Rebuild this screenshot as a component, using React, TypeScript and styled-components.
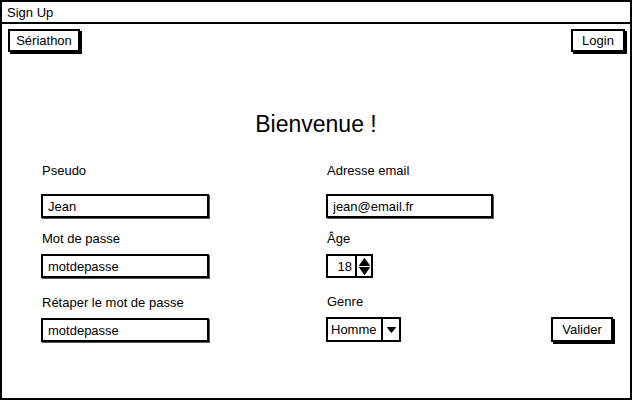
import React from "react";
import styled, { createGlobalStyle } from "styled-components";

const Global = createGlobalStyle`
  html, body { margin: 0; padding: 0; background: #fff; }
  body { font-family: "Liberation Sans", Arial, sans-serif; color: #000; }
  * { box-sizing: border-box; }
`;

const Frame = styled.div`
  width: 632px;
  height: 400px;
  border: 2px solid #000;
  display: flex;
  flex-direction: column;
  background: #fff;
`;

const TitleBar = styled.div`
  height: 22px;
  line-height: 21px;
  border-bottom: 2px solid #000;
  padding-left: 5px;
  font-size: 13px;
`;

const Toolbar = styled.div`
  display: flex;
  justify-content: space-between;
  align-items: flex-start;
  padding: 5px 5px 0 6px;
`;

const SketchButton = styled.button<{ $w: number; $h?: number }>`
  width: ${(p) => p.$w}px;
  height: ${(p) => p.$h ?? 23}px;
  border: 2px solid #000;
  background: #fff;
  box-shadow: 2px 2px 0 #000;
  font-family: inherit;
  font-size: 13px;
  color: #000;
  padding: 0;
  display: flex;
  align-items: center;
  justify-content: center;
  cursor: pointer;
`;

const Heading = styled.h1`
  margin: 59px 0 0;
  font-size: 23px;
  line-height: 26px;
  font-weight: normal;
  text-align: center;
`;

const Form = styled.div`
  display: flex;
  flex-direction: column;
  padding-left: 39px;
`;

const FormRow = styled.div<{ $top: number }>`
  display: grid;
  grid-template-columns: 285px 225px auto;
  align-items: end;
  margin-top: ${(p) => p.$top}px;
`;

const Field = styled.div<{ $gap: number }>`
  display: flex;
  flex-direction: column;
  align-items: flex-start;
  gap: ${(p) => p.$gap}px;
`;

const Label = styled.label`
  font-size: 13px;
  line-height: 16px;
  padding-left: 1px;
`;

const TextBox = styled.input<{ $w: number }>`
  width: ${(p) => p.$w}px;
  height: 24px;
  border: 2px solid #000;
  box-shadow: 1px 1px 0 #555;
  padding: 0 5px;
  font-family: inherit;
  font-size: 13px;
  color: #000;
  background: #fff;
  outline: none;
`;

const Combo = styled.div<{ $h: number }>`
  display: flex;
  height: ${(p) => p.$h}px;
  border: 2px solid #000;
  background: #fff;
`;

const ComboValue = styled.div<{ $w: number; $align: string }>`
  width: ${(p) => p.$w}px;
  display: flex;
  align-items: center;
  justify-content: ${(p) => p.$align};
  padding: 0 3px;
  font-size: 13px;
  border-right: 2px solid #000;
`;

const ComboArrow = styled.div<{ $w: number }>`
  width: ${(p) => p.$w}px;
  display: flex;
  align-items: center;
  justify-content: center;
`;

const ValiderCell = styled.div`
  display: flex;
`;

const SpinIcon = () => (
  <svg width="11" height="17" viewBox="0 0 11 17">
    <path d="M5.5 0.5 L10.5 7.5 L0.5 7.5 Z" fill="#000" stroke="#000" strokeLinejoin="round" />
    <path d="M0.5 9.5 L10.5 9.5 L5.5 16.5 Z" fill="#000" stroke="#000" strokeLinejoin="round" />
  </svg>
);

const DownIcon = () => (
  <svg width="9" height="6" viewBox="0 0 9 6">
    <path d="M0.5 0.5 L8.5 0.5 L4.5 5.5 Z" fill="#000" stroke="#000" strokeLinejoin="round" />
  </svg>
);

export default function App() {
  return (
    <>
      <Global />
      <Frame>
        <TitleBar>Sign Up</TitleBar>
        <Toolbar>
          <SketchButton $w={72}>Sériathon</SketchButton>
          <SketchButton $w={54}>Login</SketchButton>
        </Toolbar>
        <Heading>Bienvenue !</Heading>
        <Form>
          <FormRow $top={26}>
            <Field $gap={15}>
              <Label>Pseudo</Label>
              <TextBox $w={168} defaultValue="Jean" readOnly />
            </Field>
            <Field $gap={15}>
              <Label>Adresse email</Label>
              <TextBox $w={167} defaultValue="jean@email.fr" readOnly />
            </Field>
            <div />
          </FormRow>
          <FormRow $top={13}>
            <Field $gap={7}>
              <Label>Mot de passe</Label>
              <TextBox $w={168} defaultValue="motdepasse" readOnly />
            </Field>
            <Field $gap={7}>
              <Label>Âge</Label>
              <Combo $h={24}>
                <ComboValue $w={29} $align="flex-end">18</ComboValue>
                <ComboArrow $w={14}>
                  <SpinIcon />
                </ComboArrow>
              </Combo>
            </Field>
            <div />
          </FormRow>
          <FormRow $top={16}>
            <Field $gap={7}>
              <Label>Rétaper le mot de passe</Label>
              <TextBox $w={168} defaultValue="motdepasse" readOnly />
            </Field>
            <Field $gap={7}>
              <Label>Genre</Label>
              <Combo $h={25}>
                <ComboValue $w={55} $align="flex-start">Homme</ComboValue>
                <ComboArrow $w={16}>
                  <DownIcon />
                </ComboArrow>
              </Combo>
            </Field>
            <ValiderCell>
              <SketchButton $w={62} $h={25}>Valider</SketchButton>
            </ValiderCell>
          </FormRow>
        </Form>
      </Frame>
    </>
  );
}
